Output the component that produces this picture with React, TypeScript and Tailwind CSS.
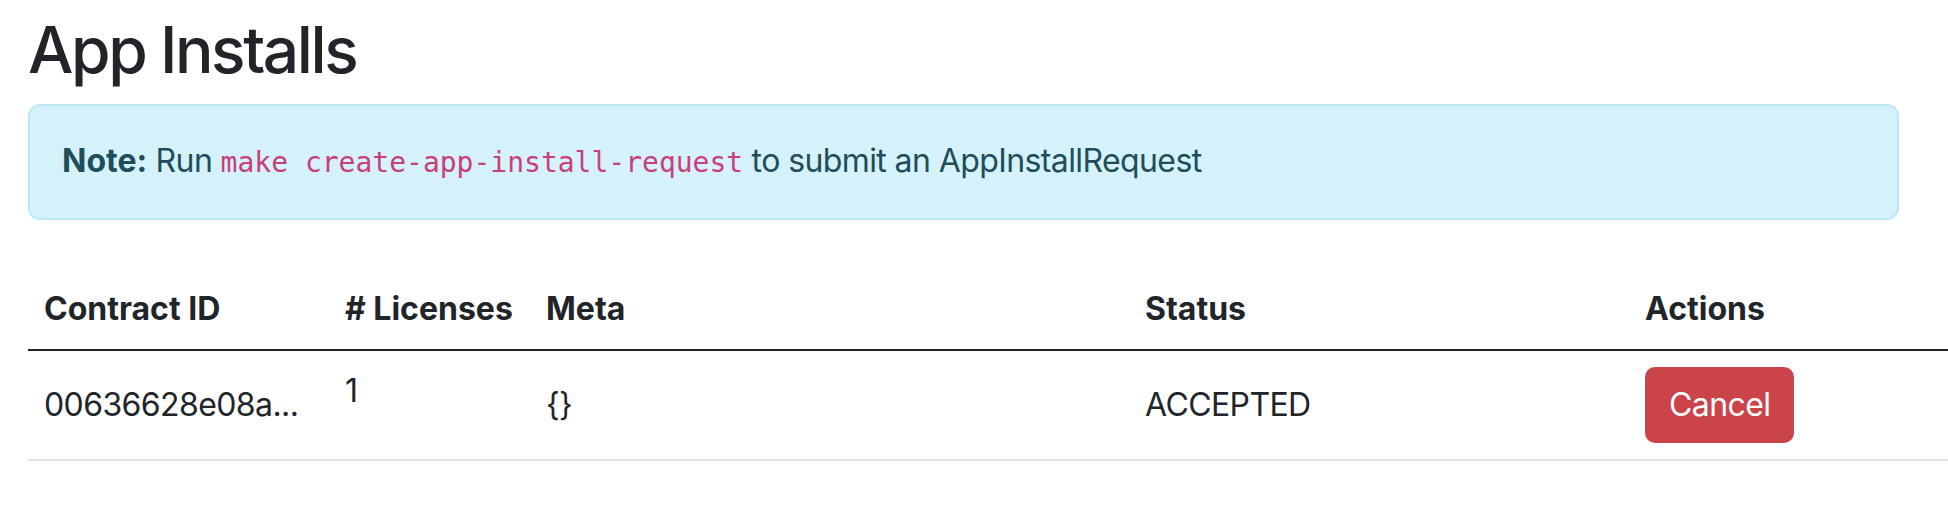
const sans = "font-['Inter','Liberation_Sans',sans-serif]";
const mono = "font-['DejaVu_Sans_Mono','Liberation_Mono',monospace]";

const columns = ['Contract ID', '# Licenses', 'Meta', 'Status', 'Actions'];

export default function App() {
  return (
    <div className={`min-h-[510px] overflow-hidden bg-white pl-[28px] pt-[12px] text-[#212529] ${sans}`}>
      <h1 className="mb-[15px] text-[64px] font-medium leading-[1.2] tracking-[-2.4px]">App Installs</h1>

      <div className="mr-[49px] rounded-[12px] border-2 border-[#bde9f6] bg-[#d5f2fa] px-[32px] py-[31px] text-[32px] leading-[48px] tracking-[-0.6px] text-[#204d5c]">
        <strong className="font-bold tracking-normal">Note:</strong> Run{' '}
        <code className={`text-[28px] tracking-normal text-[#c8407a] ${mono}`}>make create-app-install-request</code> to
        submit an AppInstallRequest
      </div>

      <div className="mt-[49px] text-[32px] leading-[48px]">
        <div className="grid grid-cols-[301px_201px_599px_500px_1fr] border-b-2 border-[#212529]">
          {columns.map((col) => (
            <div key={col} className="whitespace-nowrap p-4 font-bold">
              {col}
            </div>
          ))}
        </div>
        <div className="grid grid-cols-[301px_201px_599px_500px_1fr] items-center border-b-2 border-[#dee2e6] tracking-[-0.6px]">
          <div className="whitespace-nowrap p-4">00636628e08a...</div>
          <div className="self-start p-4">1</div>
          <div className="p-4">{'{}'}</div>
          <div className="p-4">ACCEPTED</div>
          <div className="p-4">
            <button className="h-[76px] rounded-[10px] bg-[#cb444a] px-[24px] text-[32px] tracking-[-0.6px] text-white">
              Cancel
            </button>
          </div>
        </div>
      </div>
    </div>
  );
}
